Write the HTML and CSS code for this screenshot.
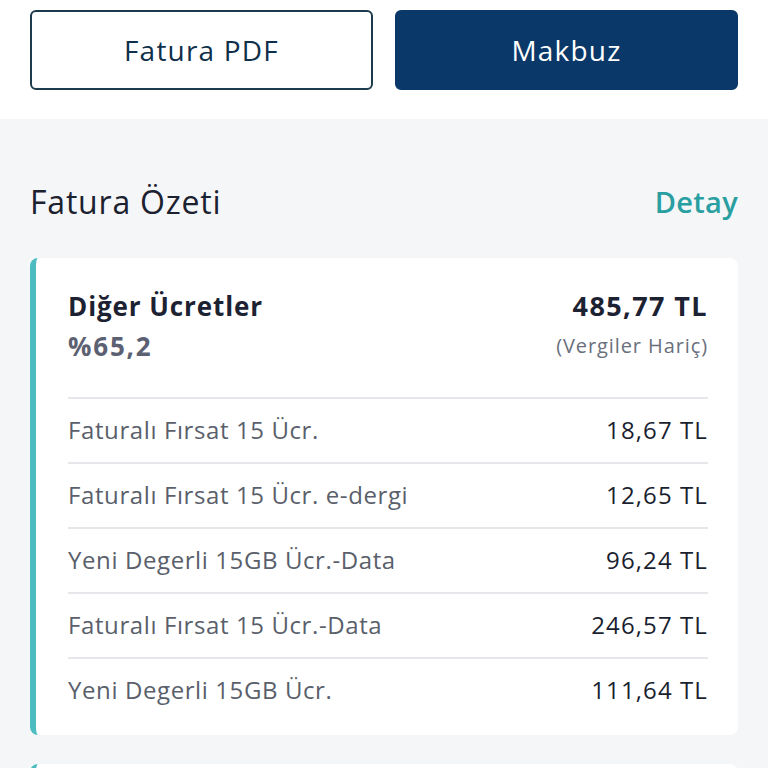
FILE: index.html
```html
<!DOCTYPE html>
<html lang="tr">
<head>
<meta charset="utf-8">
<link rel="stylesheet" href="styles.css">
</head>
<body>
<div class="top">
  <button class="btn btn-outline">Fatura PDF</button>
  <button class="btn btn-fill">Makbuz</button>
</div>
<div class="section">
  <div class="section-head">
    <h2 class="title">Fatura Özeti</h2>
    <a class="detail">Detay</a>
  </div>
  <div class="card">
    <div class="card-head">
      <div class="col">
        <div class="name">Diğer Ücretler</div>
        <div class="pct">%65,2</div>
      </div>
      <div class="col right">
        <div class="total">485,77 TL</div>
        <div class="note">(Vergiler Hariç)</div>
      </div>
    </div>
    <div class="row"><span class="label">Faturalı Fırsat 15 Ücr.</span><span class="val">18,67 TL</span></div>
    <div class="row"><span class="label">Faturalı Fırsat 15 Ücr. e-dergi</span><span class="val">12,65 TL</span></div>
    <div class="row"><span class="label">Yeni Degerli 15GB Ücr.-Data</span><span class="val">96,24 TL</span></div>
    <div class="row"><span class="label">Faturalı Fırsat 15 Ücr.-Data</span><span class="val">246,57 TL</span></div>
    <div class="row"><span class="label">Yeni Degerli 15GB Ücr.</span><span class="val">111,64 TL</span></div>
  </div>
  <div class="card card-next"></div>
</div>
</body>
</html>
```
FILE: styles.css
```css
* { box-sizing: border-box; }
html, body { margin: 0; padding: 0; }
body {
  width: 768px;
  height: 768px;
  overflow: hidden;
  background: #f5f6f8;
  font-family: "Open Sans", Lato, sans-serif;
  color: #1d2232;
}
.top {
  background: #fff;
  height: 119px;
  padding: 10px 30px 0 30px;
  display: flex;
  gap: 22px;
}
.btn {
  flex: 1 1 0;
  width: 0;
  height: 80px;
  border-radius: 6px;
  font-family: "Open Sans", Lato, sans-serif;
  font-size: 28px;
  font-weight: 500;
  letter-spacing: 1.2px;
  cursor: pointer;
  padding: 0;
}
.btn-outline {
  background: #fff;
  border: 2px solid #1e3a4d;
  color: #0f2f4a;
}
.btn-fill {
  background: #0a3868;
  border: 2px solid #0a3868;
  color: #fff;
}
.section {
  padding: 0 30px;
}
.section-head {
  display: flex;
  justify-content: space-between;
  align-items: center;
  height: 139px;
  padding-top: 26px;
}
.title {
  margin: 0;
  font-size: 32px;
  font-weight: 400;
  letter-spacing: 0.8px;
  color: #1c2130;
}
.detail {
  font-size: 29px;
  font-weight: 600;
  letter-spacing: 0.3px;
  color: #2a9fa1;
}
.card {
  background: #fff;
  border-radius: 8px;
  border-left: 6px solid #4dbcc1;
  padding: 0 30px 13px 32px;
}
.card-head {
  display: flex;
  justify-content: space-between;
  padding-top: 28px;
  height: 139px;
}
.col { display: flex; flex-direction: column; }
.right { align-items: flex-end; }
.name {
  font-size: 26px;
  font-weight: 700;
  letter-spacing: 0.9px;
  color: #1d2232;
  line-height: 40px;
}
.pct {
  font-size: 26px;
  font-weight: 700;
  letter-spacing: 1.8px;
  color: #5b6172;
  line-height: 40px;
}
.total {
  font-size: 27px;
  font-weight: 700;
  letter-spacing: 1.4px;
  color: #1d2232;
  line-height: 40px;
}
.note {
  font-size: 20px;
  letter-spacing: 0.9px;
  color: #6a6f7c;
  line-height: 40px;
}
.row {
  display: flex;
  justify-content: space-between;
  align-items: center;
  height: 65px;
  border-top: 2px solid #e6e7ea;
  font-size: 24px;
  letter-spacing: 0.6px;
  padding-bottom: 3px;
}
.label { color: #5a5f6b; }
.val { color: #1a1f30; font-weight: 500; letter-spacing: 1.1px; }
.card-next {
  margin-top: 29px;
  height: 60px;
}
```
